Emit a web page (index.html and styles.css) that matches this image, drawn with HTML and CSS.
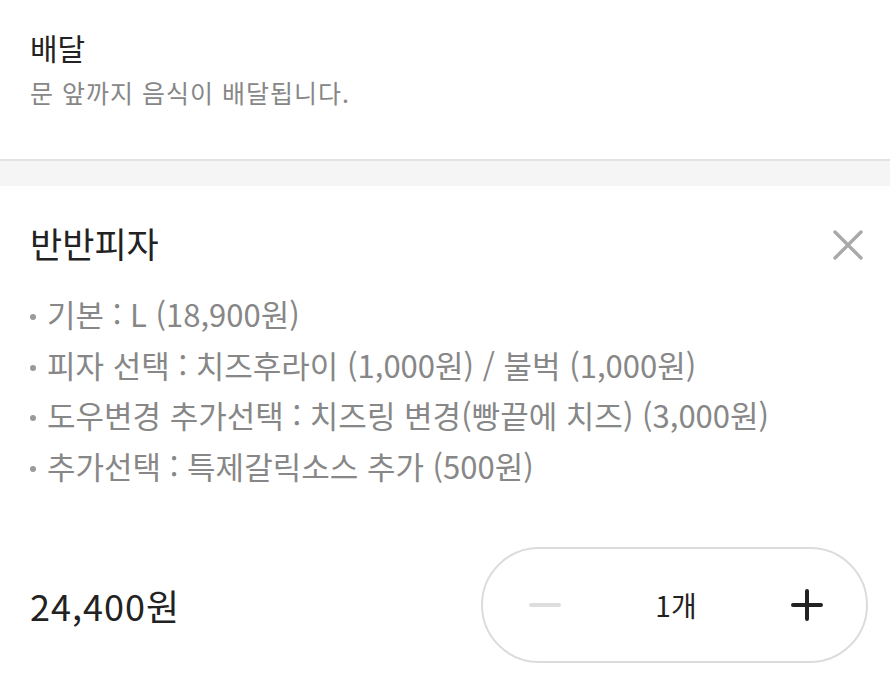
FILE: index.html
```html
<!DOCTYPE html>
<html lang="ko">
<head>
    <meta charset="UTF-8">
    <meta name="viewport" content="width=device-width, initial-scale=1.0">
    <title>장바구니</title>
    <link rel="stylesheet" href="styles.css">
</head>
<body>
    <section class="delivery">
        <h2 class="delivery-title">배달</h2>
        <p class="delivery-desc">문 앞까지 음식이 배달됩니다.</p>
    </section>

    <div class="divider"></div>

    <section class="item">
        <div class="item-head">
            <h3 class="item-name">반반피자</h3>
            <button class="close-btn" aria-label="삭제">
                <svg width="32" height="32" viewBox="0 0 32 32">
                    <path d="M3 3 L29 29 M29 3 L3 29" stroke="#a9a9a9" stroke-width="3.4" stroke-linecap="round" fill="none"/>
                </svg>
            </button>
        </div>

        <ul class="options">
            <li>기본 : L (18,900원)</li>
            <li>피자 선택 : 치즈후라이 (1,000원) / 불벅 (1,000원)</li>
            <li>도우변경 추가선택 : 치즈링 변경(빵끝에 치즈) (3,000원)</li>
            <li>추가선택 : 특제갈릭소스 추가 (500원)</li>
        </ul>

        <div class="item-foot">
            <div class="price">24,400원</div>
            <div class="stepper">
                <button class="step-btn" aria-label="빼기">
                    <svg width="32" height="32" viewBox="0 0 32 32">
                        <path d="M2 16 H30" stroke="#dddddd" stroke-width="4" stroke-linecap="round"/>
                    </svg>
                </button>
                <span class="qty">1개</span>
                <button class="step-btn" aria-label="더하기">
                    <svg width="32" height="32" viewBox="0 0 32 32">
                        <path d="M2 16 H30 M16 2 V30" stroke="#222222" stroke-width="4" stroke-linecap="round"/>
                    </svg>
                </button>
            </div>
        </div>
    </section>
</body>
</html>
```

FILE: styles.css
```css
:root {
    --text: #222222;
    --muted: #878787;
    --line: #e2e2e2;
    --band: #f5f5f5;
}

* {
    box-sizing: border-box;
}

body {
    margin: 0;
    font-family: "Noto Sans CJK KR", "Noto Sans", sans-serif;
    background: white;
    color: var(--text);
}

.delivery {
    padding: 26px 30px 0;
    height: 159px;
}

.delivery-title {
    margin: 0;
    font-size: 30px;
    font-weight: 400;
    line-height: 42px;
}

.delivery-desc {
    margin: 7px 0 0;
    font-size: 25px;
    line-height: 34px;
    color: var(--muted);
    letter-spacing: 1px;
}

.divider {
    height: 27px;
    border-top: 2px solid var(--line);
    background: var(--band);
}

.item {
    padding: 32px 26px 0 30px;
}

.item-head {
    display: flex;
    justify-content: space-between;
    align-items: center;
}

.item-name {
    margin: 0;
    font-size: 35px;
    font-weight: 400;
    line-height: 50px;
}

.close-btn,
.step-btn {
    border: none;
    background: none;
    padding: 0;
    display: flex;
    cursor: pointer;
}

.close-btn {
    margin-top: 4px;
}

.options {
    list-style: none;
    margin: 21px 0 0;
    padding: 0;
    color: var(--muted);
    font-size: 31px;
    line-height: 50.5px;
}

.options li {
    display: flex;
    align-items: center;
}

.options li::before {
    content: "";
    width: 6px;
    height: 6px;
    border-radius: 50%;
    background: #9a9a9a;
    margin: 6px 11px 0 0;
    flex-shrink: 0;
}

.item-foot {
    display: flex;
    justify-content: space-between;
    align-items: center;
    margin-top: 56px;
}

.price {
    font-size: 36px;
    letter-spacing: 1px;
}

.stepper {
    width: 387px;
    height: 116px;
    border: 2px solid #dcdcdc;
    border-radius: 58px;
    display: flex;
    align-items: center;
    justify-content: space-between;
    padding: 0 43px 0 46px;
    margin-right: -4px;
}

.qty {
    font-size: 28px;
}
```
